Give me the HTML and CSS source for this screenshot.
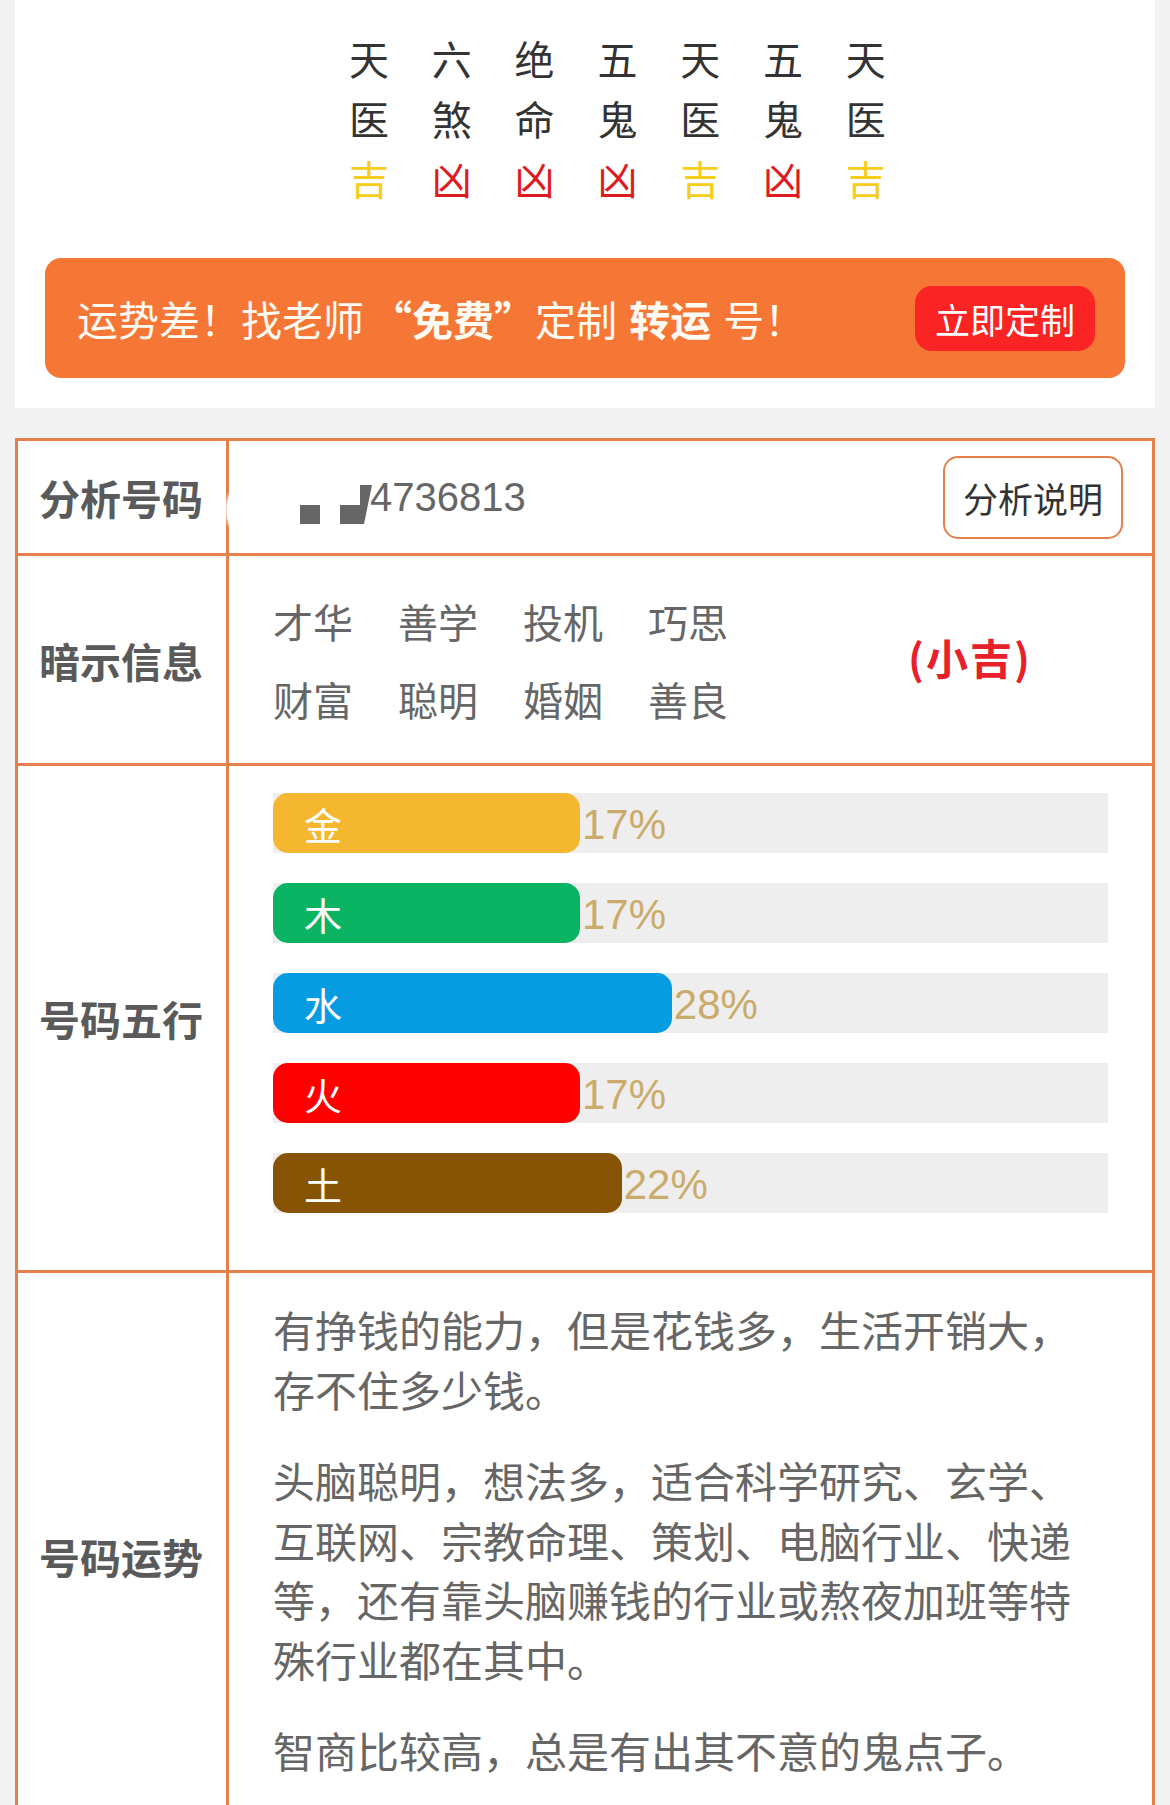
FILE: index.html
```html
<!DOCTYPE html>
<html lang="zh-CN">
<head>
<meta charset="utf-8">
<title>号码分析</title>
<link rel="stylesheet" href="styles.css">
</head>
<body>
<div class="page">
  <section class="top-card">
    <div class="star-grid">
      <span>天</span><span>六</span><span>绝</span><span>五</span><span>天</span><span>五</span><span>天</span>
      <span>医</span><span>煞</span><span>命</span><span>鬼</span><span>医</span><span>鬼</span><span>医</span>
      <span class="ji">吉</span><span class="xiong">凶</span><span class="xiong">凶</span><span class="xiong">凶</span><span class="ji">吉</span><span class="xiong">凶</span><span class="ji">吉</span>
    </div>
    <div class="banner">
      <div class="banner-text">运势差！找老师<b class="free">“免费”</b>定制 <b>转运</b> 号！</div>
      <div class="banner-btn">立即定制</div>
    </div>
  </section>

  <section class="table">
    <div class="row row-number">
      <div class="label">分析号码</div>
      <div class="cell cell-number">
        <span class="glow"></span>
        <div class="number">
          <svg class="mask" width="72" height="50" viewBox="0 0 72 50"><rect x="0" y="25" width="20" height="19" fill="#666"/><polygon points="40,25 60,25 60,5 72,5 64,44 40,44" fill="#666"/></svg><span class="digits">4736813</span>
        </div>
        <div class="explain-btn">分析说明</div>
      </div>
    </div>

    <div class="row row-hint">
      <div class="label">暗示信息</div>
      <div class="cell cell-hint">
        <div class="tags">
          <span>才华</span><span>善学</span><span>投机</span><span>巧思</span>
          <span>财富</span><span>聪明</span><span>婚姻</span><span>善良</span>
        </div>
        <div class="verdict">(小吉)</div>
      </div>
    </div>

    <div class="row row-wuxing">
      <div class="label">号码五行</div>
      <div class="cell cell-bars">
        <div class="track"><div class="fill jin" style="width: calc(165px + 17%)">金</div><span class="pct">17%</span></div>
        <div class="track"><div class="fill mu" style="width: calc(165px + 17%)">木</div><span class="pct">17%</span></div>
        <div class="track"><div class="fill shui" style="width: calc(165px + 28%)">水</div><span class="pct">28%</span></div>
        <div class="track"><div class="fill huo" style="width: calc(165px + 17%)">火</div><span class="pct">17%</span></div>
        <div class="track"><div class="fill tu" style="width: calc(165px + 22%)">土</div><span class="pct">22%</span></div>
      </div>
    </div>

    <div class="row row-fortune">
      <div class="label">号码运势</div>
      <div class="cell cell-text">
        <p>有挣钱的能力，但是花钱多，生活开销大，存不住多少钱。</p>
        <p>头脑聪明，想法多，适合科学研究、玄学、互联网、宗教命理、策划、电脑行业、快递等，还有靠头脑赚钱的行业或熬夜加班等特殊行业都在其中。</p>
        <p>智商比较高，总是有出其不意的鬼点子。</p>
      </div>
    </div>
  </section>
</div>
</body>
</html>
```

FILE: styles.css
```css
* { box-sizing: border-box; }

html, body {
  margin: 0;
  padding: 0;
}

body {
  background: #f2f2f2;
  font-family: "Noto Sans CJK SC", "Noto Sans", sans-serif;
  width: 1170px;
}

.page {
  padding: 0 15px;
}

/* ---------- top card ---------- */
.top-card {
  background: #fff;
  padding: 38px 30px 30px;
}

.star-grid {
  display: grid;
  grid-template-columns: repeat(7, 40px);
  column-gap: 42.8px;
  row-gap: 20px;
  padding-left: 304px;
  font-size: 40px;
  line-height: 40px;
  color: #333;
}

.star-grid span { text-align: center; }
.star-grid .ji { color: #f6cd1c; }
.star-grid .xiong { color: #de1b1f; }

.banner {
  margin-top: 60px;
  height: 120px;
  background: #f67636;
  border-radius: 16px;
  display: flex;
  align-items: center;
  justify-content: space-between;
  padding: 0 30px 0 32px;
}

.banner-text {
  color: #fffaf2;
  font-size: 41px;
  line-height: 1;
  white-space: nowrap;
  word-spacing: 3px;
}

.banner-text b { font-weight: 700; }
.banner-text .free { margin-left: 7px; }

.banner-btn {
  width: 180px;
  height: 65px;
  border-radius: 17px;
  background: #fa2424;
  color: #fff;
  font-size: 35px;
  display: flex;
  align-items: center;
  justify-content: center;
}

/* ---------- table ---------- */
.table {
  margin-top: 30px;
  border: 3px solid #e3804c;
  border-bottom: 0;
  background: #fff;
}

.row {
  display: grid;
  grid-template-columns: 211px 1fr;
}

.row + .row { border-top: 3px solid #e3804c; }

.label {
  border-right: 3px solid #e3804c;
  display: flex;
  align-items: center;
  justify-content: center;
  font-size: 41px;
  font-weight: 700;
  color: #5a5a5a;
  white-space: nowrap;
  padding-right: 2px;
}

.cell { min-width: 0; }

.row-number { height: 112px; }

.cell-number {
  position: relative;
  display: flex;
  align-items: center;
  justify-content: space-between;
  padding: 0 29px 0 71px;
}

.glow {
  position: absolute;
  left: -2px;
  top: 51px;
  width: 12px;
  height: 36px;
  border-radius: 50%;
  background: #fff;
  box-shadow: 0 0 3px 1px #fff;
}

.number {
  display: flex;
  align-items: center;
  height: 50px;
  margin-top: 14px;
}

.mask {
  display: block;
  margin-top: 2px;
  margin-right: -2px;
}

.digits {
  font-family: "Liberation Sans", Arial, sans-serif;
  font-size: 40px;
  color: #666;
  line-height: 1;
  margin-top: -14px;
}

.explain-btn {
  width: 180px;
  height: 83px;
  border: 2px solid #e3804c;
  border-radius: 15px;
  display: flex;
  align-items: center;
  justify-content: center;
  font-size: 35px;
  color: #333;
}

.row-hint { height: 210px; }

.cell-hint {
  display: flex;
  align-items: center;
  padding-left: 44px;
}

.tags {
  display: grid;
  grid-template-columns: repeat(4, 80px);
  column-gap: 45px;
  row-gap: 38px;
  font-size: 40px;
  line-height: 40px;
  color: #666;
}

.verdict {
  margin-left: 180px;
  margin-top: -6px;
  font-size: 42px;
  font-weight: 700;
  letter-spacing: 2px;
  color: #e8202a;
  white-space: nowrap;
}

.cell-bars {
  padding: 27px 44px 27px 44px;
}

.track {
  height: 60px;
  background: #eeeeee;
  margin-bottom: 30px;
  display: flex;
  align-items: center;
}

.fill {
  height: 60px;
  border-radius: 15px;
  display: flex;
  align-items: center;
  padding-left: 31px;
  color: #fff;
  font-size: 38px;
  flex: none;
}

.fill.jin { background: #f6b730; }
.fill.mu { background: #0ab463; }
.fill.shui { background: #079ce2; }
.fill.huo { background: #ff0000; }
.fill.tu { background: #875305; }

.pct {
  margin-left: 2px;
  margin-top: 4px;
  font-family: "Liberation Sans", Arial, sans-serif;
  font-size: 42px;
  color: #cbab6b;
  line-height: 1;
}

.cell-text {
  padding: 26px 44px 27px 44px;
  font-size: 42px;
  line-height: 59.5px;
  color: #666;
}

.cell-text p {
  margin: 0 0 32px;
}
```
